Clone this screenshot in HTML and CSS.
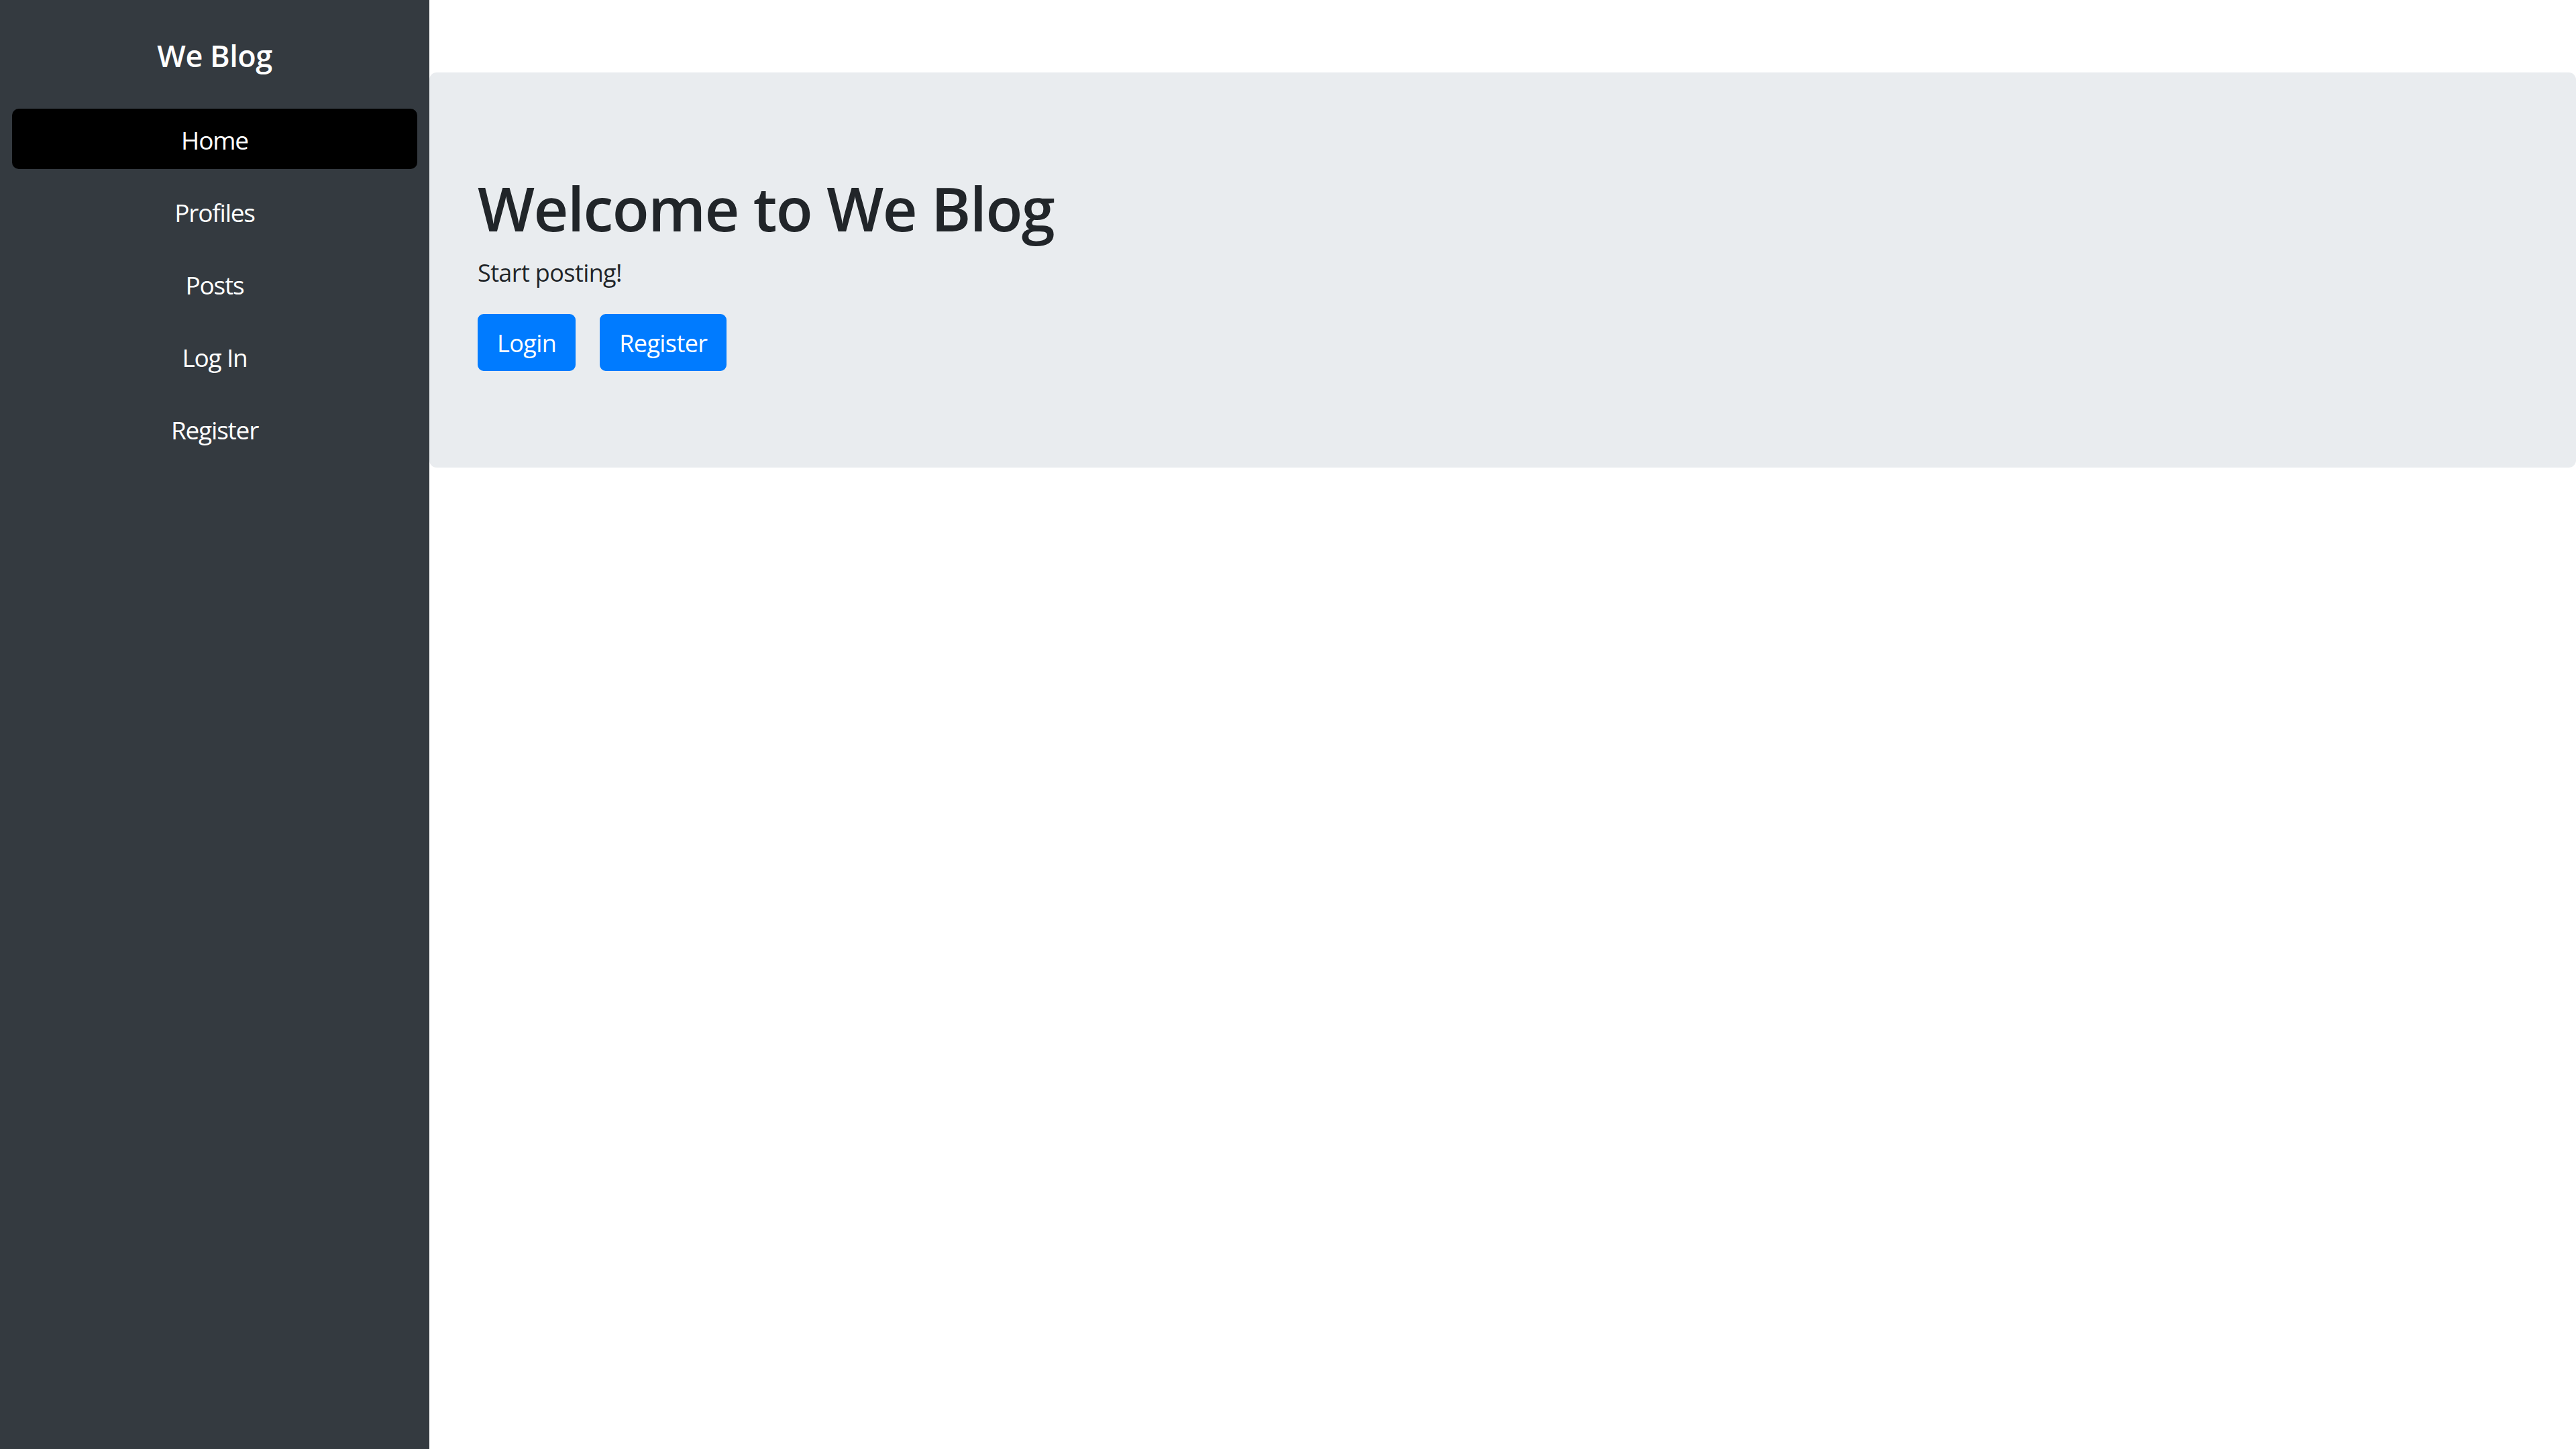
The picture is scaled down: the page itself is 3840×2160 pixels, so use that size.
FILE: index.html
```html
<!DOCTYPE html>
<html lang="en">
<head>
<meta charset="utf-8">
<title>We Blog</title>
<link rel="stylesheet" href="styles.css">
</head>
<body>
<div class="layout">
  <aside class="sidebar">
    <div class="brand">We Blog</div>
    <nav class="nav">
      <a class="nav-link active" href="#">Home</a>
      <a class="nav-link" href="#">Profiles</a>
      <a class="nav-link" href="#">Posts</a>
      <a class="nav-link" href="#">Log In</a>
      <a class="nav-link" href="#">Register</a>
    </nav>
  </aside>
  <main class="main">
    <section class="jumbotron">
      <h1 class="title">Welcome to We Blog</h1>
      <p class="lead">Start posting!</p>
      <div class="actions">
        <a class="btn" href="#">Login</a>
        <a class="btn" href="#">Register</a>
      </div>
    </section>
  </main>
</div>
</body>
</html>
```

FILE: styles.css
```css
* { box-sizing: border-box; }

html, body {
  margin: 0;
  padding: 0;
  height: 100%;
}

body {
  font-family: "Open Sans", "Noto Sans", "Liberation Sans", sans-serif;
  color: #212529;
  background: #ffffff;
}

.layout {
  display: flex;
  min-height: 100vh;
}

.sidebar {
  width: 640px;
  flex-shrink: 0;
  background: #343a40;
  padding: 18px;
  display: flex;
  flex-direction: column;
}

.brand {
  color: #ffffff;
  font-size: 45px;
  font-weight: 600;
  line-height: 68px;
  letter-spacing: -0.5px;
  text-align: center;
  margin-top: 31px;
  margin-bottom: 45px;
}

.nav {
  display: flex;
  flex-direction: column;
  gap: 18px;
}

.nav-link {
  display: block;
  height: 90px;
  line-height: 94px;
  font-size: 37px;
  letter-spacing: -1.2px;
  color: #ffffff;
  text-align: center;
  text-decoration: none;
  border-radius: 10px;
}

.nav-link.active {
  background: #000000;
}

.main {
  flex: 1;
  padding-top: 108px;
}

.jumbotron {
  background: #e9ecef;
  border-radius: 11px;
  padding: 144px 72px;
}

.title {
  margin: 0 0 18px;
  padding-top: 4px;
  height: 108px;
  font-size: 90px;
  font-weight: 600;
  letter-spacing: -1.5px;
  line-height: 108px;
  color: #212529;
}

.lead {
  margin: 0 0 36px;
  height: 54px;
  padding-top: 2px;
  font-size: 36px;
  line-height: 54px;
  letter-spacing: -0.6px;
}

.actions {
  display: flex;
  gap: 36px;
}

.btn {
  display: inline-block;
  height: 85px;
  padding: 3px 27px 0;
  line-height: 78px;
  font-size: 36px;
  letter-spacing: -0.6px;
  color: #ffffff;
  background: #007bff;
  border: 2px solid #007bff;
  border-radius: 9px;
  text-decoration: none;
}
```
